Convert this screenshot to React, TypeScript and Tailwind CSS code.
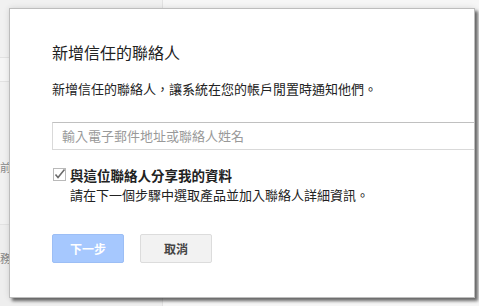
import React from "react";

const font = {
  fontFamily: '"Noto Sans CJK TC", "Noto Sans", Arial, sans-serif',
};

function CheckIcon() {
  return (
    <svg width="13" height="13" viewBox="0 0 13 13" className="shrink-0">
      <rect x="0.5" y="0.5" width="12" height="12" fill="#fff" stroke="#b9b9b9" />
      <path d="M2.5 6.5 L5 9.5 L11.5 1.5" fill="none" stroke="#6b6b6b" strokeWidth="1.6" />
    </svg>
  );
}

export default function App() {
  return (
    <div className="relative w-[479px] h-[306px] overflow-hidden bg-[#f3f3f3]" style={font}>
      {/* page behind the dialog */}
      <div className="flex h-full">
        <div className="w-[163px] h-full border-r border-[#e2e2e2] flex flex-col">
          <div className="h-[58px] border-b border-[#e2e2e2] bg-[#f1f1f1]" />
          <div className="h-[24px] border-b border-[#e2e2e2] bg-[#f5f5f5]" />
          <div className="h-[143px] border-b border-[#e2e2e2] bg-[#f1f1f1] pt-[77px] text-[11px] leading-[16px] text-[#888] whitespace-nowrap">
            前的設定
          </div>
          <div className="flex-1 bg-[#eeeeee] pt-[25px] text-[11px] leading-[16px] text-[#888] whitespace-nowrap">
            務所
          </div>
        </div>
        <div className="flex-1 bg-[#f6f6f6]" />
      </div>

      {/* dialog */}
      <div className="absolute left-[9px] top-[8px] w-[466px] h-[290px] bg-white border border-[#bdbdbd] overflow-hidden shadow-[3px_3px_3px_rgba(0,0,0,0.55),0_0_6px_rgba(0,0,0,0.12)]">
        <div className="pl-[42px] pt-[31px] flex flex-col">
          <div className="h-[24px] text-[16px] leading-[24px] text-[#222]">新增信任的聯絡人</div>
          <div className="mt-[15px] h-[20px] text-[13px] leading-[20px] text-[#222] whitespace-nowrap">
            新增信任的聯絡人，讓系統在您的帳戶閒置時通知他們。
          </div>
          <div className="mt-[23px] w-[460px] h-[28px] border border-[#d9d9d9] border-t-[#c0c0c0] flex items-center pl-[9px] text-[13px] text-[#999] whitespace-nowrap">
            輸入電子郵件地址或聯絡人姓名
          </div>
          <div className="mt-[15px] flex items-start gap-[4px]">
            <div className="pt-[3px] pl-[1px]">
              <CheckIcon />
            </div>
            <div className="flex flex-col">
              <div className="h-[20px] text-[13.5px] leading-[20px] font-bold text-[#222] whitespace-nowrap">
                與這位聯絡人分享我的資料
              </div>
              <div className="h-[20px] text-[13px] leading-[20px] text-[#222] whitespace-nowrap">
                請在下一個步驟中選取產品並加入聯絡人詳細資訊。
              </div>
            </div>
          </div>
          <div className="mt-[29px] flex gap-[16px]">
            <button className="w-[72px] h-[29px] rounded-[2px] bg-[#a6c8fe] border border-[#9cbef5] text-white text-[12px] font-bold">
              下一步
            </button>
            <button className="w-[72px] h-[29px] rounded-[2px] bg-[#f2f2f2] border border-[#dcdcdc] text-[#444] text-[12px] font-bold">
              取消
            </button>
          </div>
        </div>
      </div>
    </div>
  );
}
